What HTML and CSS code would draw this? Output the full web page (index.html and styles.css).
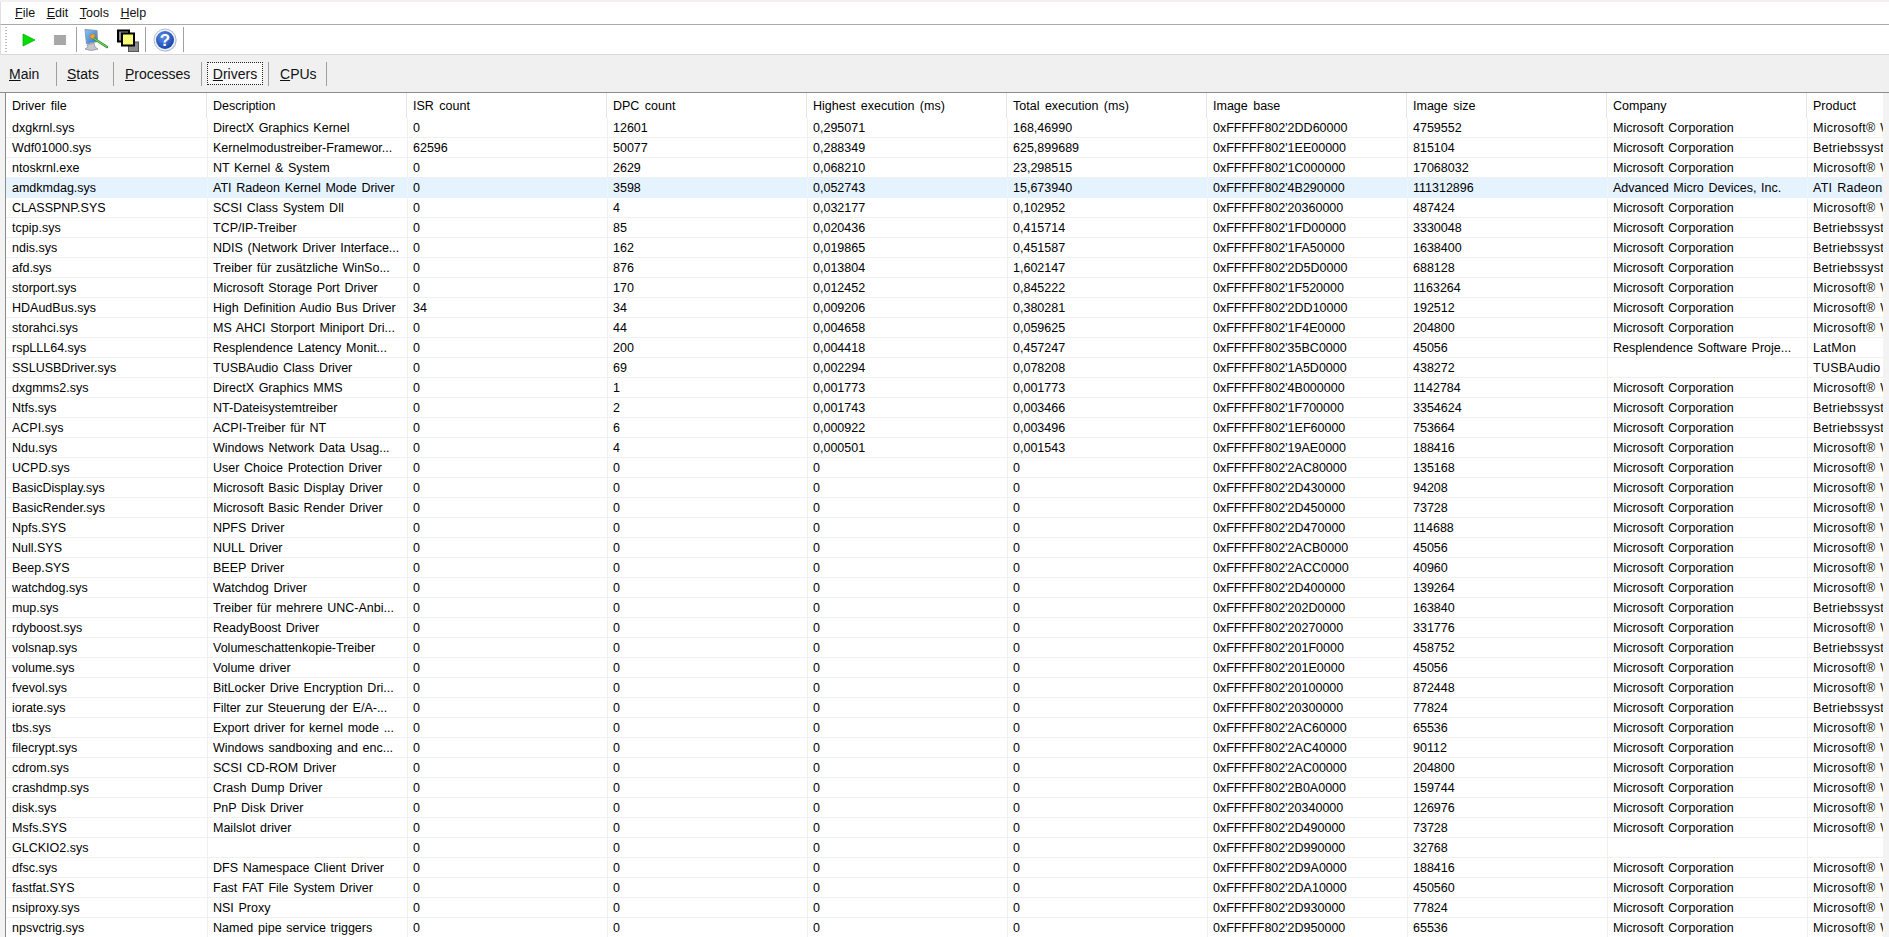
FILE: index.html
```html
<!DOCTYPE html>
<html lang="en">
<head>
<meta charset="utf-8">
<title>LatencyMon</title>
<link rel="stylesheet" href="styles.css">
</head>
<body>
<div class="app">
  <div class="topstrip"></div>
  <nav class="menubar">
    <span class="menu"><u>F</u>ile</span>
    <span class="menu"><u>E</u>dit</span>
    <span class="menu"><u>T</u>ools</span>
    <span class="menu"><u>H</u>elp</span>
  </nav>
  <div class="toolbar">
    <div class="gripper"></div>
    <button class="tool tool-play"><svg width="14" height="14" viewBox="0 0 14 14"><path d="M1 1 L13 7 L1 13 Z" fill="#00e000" stroke="#00a800" stroke-width="0.7"/></svg></button>
    <button class="tool tool-stop"><span class="stopbox"></span></button>
    <span class="tsep"></span>
    <button class="tool tool-wide"><svg width="26" height="24" viewBox="0 0 26 24">
      <defs><linearGradient id="scr" x1="0" y1="0" x2="1" y2="1"><stop offset="0" stop-color="#8cc4f4"/><stop offset="1" stop-color="#2a6fd0"/></linearGradient></defs>
      <path d="M3 1.5 L15 2.5 L15.5 13.5 L4.5 16 Z" fill="url(#scr)" stroke="#8d98ac" stroke-width="1"/>
      <path d="M5 17 L12 15 L13 19 L16 21 Q9 24 3 21 L6 19 Z" fill="#c4c7d0" stroke="#8a8d98" stroke-width="0.7"/>
      <path d="M11 10 L25 19" stroke="#2f9a2a" stroke-width="2.6" stroke-linecap="round"/>
      <path d="M11 10 L25 19" stroke="#8ad874" stroke-width="0.9"/>
      <path d="M7.5 7.5 L12.5 5.5 L13 9 L9.5 11 Z" fill="#f0a828" stroke="#b8741a" stroke-width="0.6"/>
    </svg></button>
    <button class="tool tool-squares"><svg width="24" height="25" viewBox="0 0 24 25">
      <defs><pattern id="chk" width="2" height="2" patternUnits="userSpaceOnUse"><rect width="2" height="2" fill="#ffff20"/><rect width="1" height="1" fill="#f8f8d0"/><rect x="1" y="1" width="1" height="1" fill="#f8f8d0"/></pattern></defs>
      <rect x="3" y="3.5" width="11" height="11" fill="#8c8c8c" stroke="#000" stroke-width="2"/>
      <rect x="13.5" y="15" width="10" height="9.5" fill="#8c8c8c" stroke="#555" stroke-width="1"/>
      <rect x="7" y="6.5" width="12" height="12" fill="url(#chk)" stroke="#000" stroke-width="2"/>
    </svg></button>
    <span class="tsep"></span>
    <button class="tool tool-help"><svg width="24" height="24" viewBox="0 0 24 24">
      <defs><radialGradient id="hb" cx="0.4" cy="0.35" r="0.7"><stop offset="0" stop-color="#5f8fe8"/><stop offset="1" stop-color="#123fa8"/></radialGradient></defs>
      <circle cx="12.5" cy="12.5" r="11" fill="#c8ced8"/>
      <circle cx="12" cy="12" r="11" fill="#eef2f8" stroke="#9fb0c8" stroke-width="0.8"/>
      <circle cx="12" cy="12" r="9" fill="url(#hb)"/>
      <text class="helpq" x="12" y="18" text-anchor="middle">?</text>
    </svg></button>
    <span class="tsep"></span>
  </div>
  <div class="tabs">
    <span class="tab tab-main"><u>M</u>ain</span>
    <span class="tab tab-stats"><u>S</u>tats</span>
    <span class="tab tab-proc"><u>P</u>rocesses</span>
    <span class="tab tab-drivers"><span class="focus"><u>D</u>rivers</span></span>
    <span class="tab tab-cpus"><u>C</u>PUs</span>
  </div>
  <div class="listframe">
    <div class="listclip">
    <table class="list">
      <colgroup>
        <col class="c0"><col class="cn"><col class="cn"><col class="cn"><col class="cn"><col class="cn"><col class="cn"><col class="cn"><col class="cn"><col class="cl">
      </colgroup>
      <thead>
        <tr><th>Driver file</th><th>Description</th><th>ISR count</th><th>DPC count</th><th>Highest execution (ms)</th><th>Total execution (ms)</th><th>Image base</th><th>Image size</th><th>Company</th><th>Product</th></tr>
      </thead>
      <tbody>
        <tr><td>dxgkrnl.sys</td><td>DirectX Graphics Kernel</td><td>0</td><td>12601</td><td>0,295071</td><td>168,46990</td><td>0xFFFFF802'2DD60000</td><td>4759552</td><td>Microsoft Corporation</td><td>Microsoft® Windows®</td></tr>
        <tr><td>Wdf01000.sys</td><td>Kernelmodustreiber-Framewor...</td><td>62596</td><td>50077</td><td>0,288349</td><td>625,899689</td><td>0xFFFFF802'1EE00000</td><td>815104</td><td>Microsoft Corporation</td><td>Betriebssystem</td></tr>
        <tr><td>ntoskrnl.exe</td><td>NT Kernel &amp; System</td><td>0</td><td>2629</td><td>0,068210</td><td>23,298515</td><td>0xFFFFF802'1C000000</td><td>17068032</td><td>Microsoft Corporation</td><td>Microsoft® Windows®</td></tr>
        <tr class="sel"><td>amdkmdag.sys</td><td>ATI Radeon Kernel Mode Driver</td><td>0</td><td>3598</td><td>0,052743</td><td>15,673940</td><td>0xFFFFF802'4B290000</td><td>111312896</td><td>Advanced Micro Devices, Inc.</td><td>ATI Radeon Family</td></tr>
        <tr><td>CLASSPNP.SYS</td><td>SCSI Class System Dll</td><td>0</td><td>4</td><td>0,032177</td><td>0,102952</td><td>0xFFFFF802'20360000</td><td>487424</td><td>Microsoft Corporation</td><td>Microsoft® Windows®</td></tr>
        <tr><td>tcpip.sys</td><td>TCP/IP-Treiber</td><td>0</td><td>85</td><td>0,020436</td><td>0,415714</td><td>0xFFFFF802'1FD00000</td><td>3330048</td><td>Microsoft Corporation</td><td>Betriebssystem</td></tr>
        <tr><td>ndis.sys</td><td>NDIS (Network Driver Interface...</td><td>0</td><td>162</td><td>0,019865</td><td>0,451587</td><td>0xFFFFF802'1FA50000</td><td>1638400</td><td>Microsoft Corporation</td><td>Betriebssystem</td></tr>
        <tr><td>afd.sys</td><td>Treiber für zusätzliche WinSo...</td><td>0</td><td>876</td><td>0,013804</td><td>1,602147</td><td>0xFFFFF802'2D5D0000</td><td>688128</td><td>Microsoft Corporation</td><td>Betriebssystem</td></tr>
        <tr><td>storport.sys</td><td>Microsoft Storage Port Driver</td><td>0</td><td>170</td><td>0,012452</td><td>0,845222</td><td>0xFFFFF802'1F520000</td><td>1163264</td><td>Microsoft Corporation</td><td>Microsoft® Windows®</td></tr>
        <tr><td>HDAudBus.sys</td><td>High Definition Audio Bus Driver</td><td>34</td><td>34</td><td>0,009206</td><td>0,380281</td><td>0xFFFFF802'2DD10000</td><td>192512</td><td>Microsoft Corporation</td><td>Microsoft® Windows®</td></tr>
        <tr><td>storahci.sys</td><td>MS AHCI Storport Miniport Dri...</td><td>0</td><td>44</td><td>0,004658</td><td>0,059625</td><td>0xFFFFF802'1F4E0000</td><td>204800</td><td>Microsoft Corporation</td><td>Microsoft® Windows®</td></tr>
        <tr><td>rspLLL64.sys</td><td>Resplendence Latency Monit...</td><td>0</td><td>200</td><td>0,004418</td><td>0,457247</td><td>0xFFFFF802'35BC0000</td><td>45056</td><td>Resplendence Software Proje...</td><td>LatMon</td></tr>
        <tr><td>SSLUSBDriver.sys</td><td>TUSBAudio Class Driver</td><td>0</td><td>69</td><td>0,002294</td><td>0,078208</td><td>0xFFFFF802'1A5D0000</td><td>438272</td><td></td><td>TUSBAudio</td></tr>
        <tr><td>dxgmms2.sys</td><td>DirectX Graphics MMS</td><td>0</td><td>1</td><td>0,001773</td><td>0,001773</td><td>0xFFFFF802'4B000000</td><td>1142784</td><td>Microsoft Corporation</td><td>Microsoft® Windows®</td></tr>
        <tr><td>Ntfs.sys</td><td>NT-Dateisystemtreiber</td><td>0</td><td>2</td><td>0,001743</td><td>0,003466</td><td>0xFFFFF802'1F700000</td><td>3354624</td><td>Microsoft Corporation</td><td>Betriebssystem</td></tr>
        <tr><td>ACPI.sys</td><td>ACPI-Treiber für NT</td><td>0</td><td>6</td><td>0,000922</td><td>0,003496</td><td>0xFFFFF802'1EF60000</td><td>753664</td><td>Microsoft Corporation</td><td>Betriebssystem</td></tr>
        <tr><td>Ndu.sys</td><td>Windows Network Data Usag...</td><td>0</td><td>4</td><td>0,000501</td><td>0,001543</td><td>0xFFFFF802'19AE0000</td><td>188416</td><td>Microsoft Corporation</td><td>Microsoft® Windows®</td></tr>
        <tr><td>UCPD.sys</td><td>User Choice Protection Driver</td><td>0</td><td>0</td><td>0</td><td>0</td><td>0xFFFFF802'2AC80000</td><td>135168</td><td>Microsoft Corporation</td><td>Microsoft® Windows®</td></tr>
        <tr><td>BasicDisplay.sys</td><td>Microsoft Basic Display Driver</td><td>0</td><td>0</td><td>0</td><td>0</td><td>0xFFFFF802'2D430000</td><td>94208</td><td>Microsoft Corporation</td><td>Microsoft® Windows®</td></tr>
        <tr><td>BasicRender.sys</td><td>Microsoft Basic Render Driver</td><td>0</td><td>0</td><td>0</td><td>0</td><td>0xFFFFF802'2D450000</td><td>73728</td><td>Microsoft Corporation</td><td>Microsoft® Windows®</td></tr>
        <tr><td>Npfs.SYS</td><td>NPFS Driver</td><td>0</td><td>0</td><td>0</td><td>0</td><td>0xFFFFF802'2D470000</td><td>114688</td><td>Microsoft Corporation</td><td>Microsoft® Windows®</td></tr>
        <tr><td>Null.SYS</td><td>NULL Driver</td><td>0</td><td>0</td><td>0</td><td>0</td><td>0xFFFFF802'2ACB0000</td><td>45056</td><td>Microsoft Corporation</td><td>Microsoft® Windows®</td></tr>
        <tr><td>Beep.SYS</td><td>BEEP Driver</td><td>0</td><td>0</td><td>0</td><td>0</td><td>0xFFFFF802'2ACC0000</td><td>40960</td><td>Microsoft Corporation</td><td>Microsoft® Windows®</td></tr>
        <tr><td>watchdog.sys</td><td>Watchdog Driver</td><td>0</td><td>0</td><td>0</td><td>0</td><td>0xFFFFF802'2D400000</td><td>139264</td><td>Microsoft Corporation</td><td>Microsoft® Windows®</td></tr>
        <tr><td>mup.sys</td><td>Treiber für mehrere UNC-Anbi...</td><td>0</td><td>0</td><td>0</td><td>0</td><td>0xFFFFF802'202D0000</td><td>163840</td><td>Microsoft Corporation</td><td>Betriebssystem</td></tr>
        <tr><td>rdyboost.sys</td><td>ReadyBoost Driver</td><td>0</td><td>0</td><td>0</td><td>0</td><td>0xFFFFF802'20270000</td><td>331776</td><td>Microsoft Corporation</td><td>Microsoft® Windows®</td></tr>
        <tr><td>volsnap.sys</td><td>Volumeschattenkopie-Treiber</td><td>0</td><td>0</td><td>0</td><td>0</td><td>0xFFFFF802'201F0000</td><td>458752</td><td>Microsoft Corporation</td><td>Betriebssystem</td></tr>
        <tr><td>volume.sys</td><td>Volume driver</td><td>0</td><td>0</td><td>0</td><td>0</td><td>0xFFFFF802'201E0000</td><td>45056</td><td>Microsoft Corporation</td><td>Microsoft® Windows®</td></tr>
        <tr><td>fvevol.sys</td><td>BitLocker Drive Encryption Dri...</td><td>0</td><td>0</td><td>0</td><td>0</td><td>0xFFFFF802'20100000</td><td>872448</td><td>Microsoft Corporation</td><td>Microsoft® Windows®</td></tr>
        <tr><td>iorate.sys</td><td>Filter zur Steuerung der E/A-...</td><td>0</td><td>0</td><td>0</td><td>0</td><td>0xFFFFF802'20300000</td><td>77824</td><td>Microsoft Corporation</td><td>Betriebssystem</td></tr>
        <tr><td>tbs.sys</td><td>Export driver for kernel mode ...</td><td>0</td><td>0</td><td>0</td><td>0</td><td>0xFFFFF802'2AC60000</td><td>65536</td><td>Microsoft Corporation</td><td>Microsoft® Windows®</td></tr>
        <tr><td>filecrypt.sys</td><td>Windows sandboxing and enc...</td><td>0</td><td>0</td><td>0</td><td>0</td><td>0xFFFFF802'2AC40000</td><td>90112</td><td>Microsoft Corporation</td><td>Microsoft® Windows®</td></tr>
        <tr><td>cdrom.sys</td><td>SCSI CD-ROM Driver</td><td>0</td><td>0</td><td>0</td><td>0</td><td>0xFFFFF802'2AC00000</td><td>204800</td><td>Microsoft Corporation</td><td>Microsoft® Windows®</td></tr>
        <tr><td>crashdmp.sys</td><td>Crash Dump Driver</td><td>0</td><td>0</td><td>0</td><td>0</td><td>0xFFFFF802'2B0A0000</td><td>159744</td><td>Microsoft Corporation</td><td>Microsoft® Windows®</td></tr>
        <tr><td>disk.sys</td><td>PnP Disk Driver</td><td>0</td><td>0</td><td>0</td><td>0</td><td>0xFFFFF802'20340000</td><td>126976</td><td>Microsoft Corporation</td><td>Microsoft® Windows®</td></tr>
        <tr><td>Msfs.SYS</td><td>Mailslot driver</td><td>0</td><td>0</td><td>0</td><td>0</td><td>0xFFFFF802'2D490000</td><td>73728</td><td>Microsoft Corporation</td><td>Microsoft® Windows®</td></tr>
        <tr><td>GLCKIO2.sys</td><td></td><td>0</td><td>0</td><td>0</td><td>0</td><td>0xFFFFF802'2D990000</td><td>32768</td><td></td><td></td></tr>
        <tr><td>dfsc.sys</td><td>DFS Namespace Client Driver</td><td>0</td><td>0</td><td>0</td><td>0</td><td>0xFFFFF802'2D9A0000</td><td>188416</td><td>Microsoft Corporation</td><td>Microsoft® Windows®</td></tr>
        <tr><td>fastfat.SYS</td><td>Fast FAT File System Driver</td><td>0</td><td>0</td><td>0</td><td>0</td><td>0xFFFFF802'2DA10000</td><td>450560</td><td>Microsoft Corporation</td><td>Microsoft® Windows®</td></tr>
        <tr><td>nsiproxy.sys</td><td>NSI Proxy</td><td>0</td><td>0</td><td>0</td><td>0</td><td>0xFFFFF802'2D930000</td><td>77824</td><td>Microsoft Corporation</td><td>Microsoft® Windows®</td></tr>
        <tr><td>npsvctrig.sys</td><td>Named pipe service triggers</td><td>0</td><td>0</td><td>0</td><td>0</td><td>0xFFFFF802'2D950000</td><td>65536</td><td>Microsoft Corporation</td><td>Microsoft® Windows®</td></tr>
      </tbody>
    </table>
    </div>
  </div>
</div>
</body>
</html>
```
FILE: styles.css
```css
* { box-sizing: border-box; }
html, body { margin: 0; height: 100%; overflow: hidden; }
body { background: #f0f0f0; font-family: "Liberation Sans", Arial, sans-serif; font-size: 12.5px; color: #000; }
.app { display: flex; flex-direction: column; height: 937px; }
.topstrip { height: 2px; background: #f4f0f0; flex: none; }
.menubar { height: 23px; flex: none; display: flex; align-items: center; background: #fff; border-bottom: 1px solid #a9a9a9; border-left: 1px solid #e0e0e0; padding-left: 14px; font-size: 12.5px; color: #111; }
.menu { margin-right: 11.5px; }
.toolbar { height: 30px; flex: none; display: flex; align-items: center; background: #fff; border-bottom: 1px solid #d8d8d8; border-left: 1px solid #e0e0e0; padding-left: 4px; }
.gripper { width: 2px; height: 26px; background-image: linear-gradient(#bbb 50%, transparent 50%); background-size: 2px 3px; margin-right: 7px; }
.tool { border: 0; padding: 0; background: none; display: flex; align-items: center; justify-content: center; height: 26px; }
.tool-play { width: 26px; padding-left: 4px; }
.tool-stop { width: 31px; margin-right: 5px; padding-left: 9px; }
.stopbox { width: 12px; height: 10px; background: #a8a8a8; display: block; }
.tool-wide { width: 34px; padding-left: 2px; }
.tool-squares { width: 32px; margin-right: 2px; }
.tool-help { width: 37px; }
.tsep { width: 1px; height: 25px; background: #a0a0a0; flex: none; }
.tabs { height: 37px; flex: none; display: flex; align-items: center; background: #f0f0f0; font-size: 14px; color: #111; }
.tab { height: 24px; display: flex; align-items: center; border-right: 1px solid #a0a0a0; flex: none; }
.tab-main { width: 57px; padding-left: 9px; }
.tab-stats { width: 57px; padding-left: 10px; }
.tab-proc { width: 88px; padding-left: 11px; }
.tab-drivers { width: 67px; padding-left: 5px; }
.tab-cpus { width: 58px; padding-left: 11px; }
.focus { height: 23px; width: 56px; display: flex; align-items: center; justify-content: center; border: 1px dotted #222; background: #f8f8f8; }
.listframe { flex: 1; min-height: 0; overflow: hidden; padding-left: 5px; padding-right: 6px; border-top: 1px solid #8c8c8c; background: #f3f3f3; }
.listclip { height: 100%; overflow: hidden; border-left: 1px solid #8c8c8c; background: #fff; }
.list { table-layout: fixed; border-collapse: separate; border-spacing: 0; width: 1877px; word-spacing: 1.2px; }
.c0 { width: 201px; }
.cn { width: 200px; }
.cl { width: 76px; }
.list th, .list td { text-align: left; font-weight: 400; white-space: nowrap; overflow: hidden; }
.list th { height: 25px; padding: 1px 0 0 6px; border-right: 1px solid #e5e5e5; word-spacing: 2px; }
.list td { height: 20px; padding: 0 0 0 5px; border-bottom: 1px solid #f0f0f0; border-left: 1px solid #f0f0f0; }
.list td:first-child { padding-left: 6px; border-left: 0; }
.list td:last-child { letter-spacing: 0.25px; }
.list th:last-child { border-right: 0; }
.sel td { background: #e5f3ff; border-bottom-color: #e5f3ff; border-left-color: #edf6fe; }
.helpq { font: 700 17px "Liberation Sans", sans-serif; fill: #fff; }
```
